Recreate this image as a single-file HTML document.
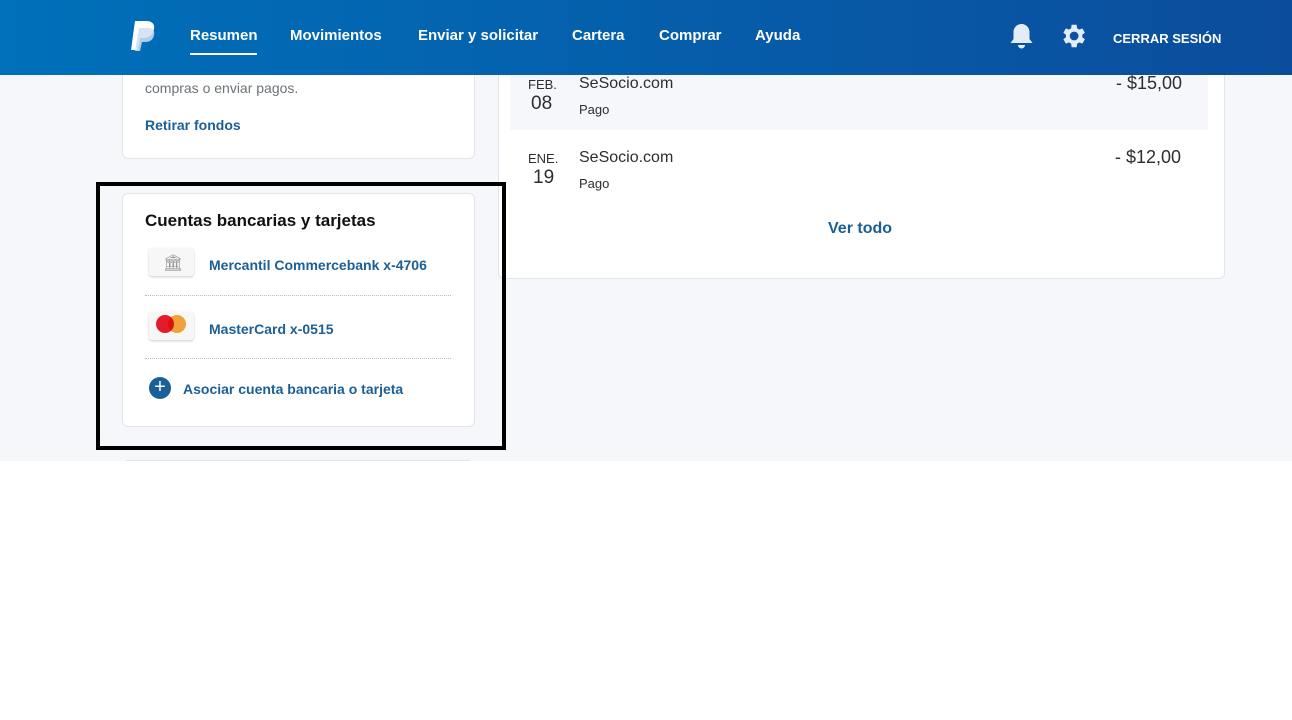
<!DOCTYPE html>
<html><head><style>
*{box-sizing:border-box;margin:0;padding:0}
body{width:1292px;height:720px;background:#fff;font-family:"Liberation Sans",sans-serif;position:relative;overflow:hidden}
.bg{position:absolute;left:0;top:0;width:1292px;height:461px;background:#f5f7fa}
.hdr{position:absolute;left:0;top:0;width:1292px;height:75px;background:linear-gradient(90deg,#0070ba,#0b4d9c);z-index:5}
.nav{position:absolute;top:27px;color:#fff;font-size:15px;font-weight:bold}
.card{position:absolute;background:#fff;border:1px solid #e1e4e8;border-radius:6px}
.a{position:absolute;color:#1a5f95;font-weight:bold;font-size:14px}
.t{position:absolute;color:#2c2e2f}
</style></head><body>
<div class="bg"></div>
<div class="hdr">
<svg style="position:absolute;left:129px;top:20px" width="28" height="32" viewBox="0 0 28 32"><path d="M6 1h11c6 0 9 3 8 8-1 6-5 9-11 9h-3l-2 12H2z" fill="#fff"/><path d="M10 8h9c5 0 7 3 6 7-1 5-4 7-9 7h-3l-2 9H6z" fill="#cfe0f1" opacity=".85"/></svg>
<div class="nav" style="left:190px">Resumen</div>
<div style="position:absolute;left:190px;top:53px;width:67px;height:2px;background:#fff"></div>
<div class="nav" style="left:290px">Movimientos</div>
<div class="nav" style="left:418px">Enviar y solicitar</div>
<div class="nav" style="left:572px">Cartera</div>
<div class="nav" style="left:659px">Comprar</div>
<div class="nav" style="left:755px">Ayuda</div>
<svg style="position:absolute;left:1009px;top:23px" width="25" height="27" viewBox="0 0 25 27"><path d="M12.5 1c-5 0-8 4-8 8v7l-3 4h22l-3-4V9c0-4-3-8-8-8z M9 22a3.5 3.5 0 0 0 7 0z" fill="#e3ecf8"/></svg>
<svg style="position:absolute;left:1058px;top:21px" width="30" height="30" viewBox="0 0 24 24"><path fill="#e3ecf8" d="M19.4 13a7.5 7.5 0 0 0 0-2l2.1-1.6-2-3.5-2.5 1a7.6 7.6 0 0 0-1.7-1L14.9 3h-4l-.4 2.9a7.6 7.6 0 0 0-1.7 1l-2.5-1-2 3.5L6.4 11a7.5 7.5 0 0 0 0 2l-2.1 1.6 2 3.5 2.5-1a7.6 7.6 0 0 0 1.7 1l.4 2.9h4l.4-2.9a7.6 7.6 0 0 0 1.7-1l2.5 1 2-3.5zM12.9 15.5a3.5 3.5 0 1 1 0-7 3.5 3.5 0 0 1 0 7z"/></svg>
<div style="position:absolute;left:1113px;top:31px;color:#fff;font-size:13px;font-weight:bold">CERRAR SESIÓN</div>
</div>

<div class="card" style="left:122px;top:40px;width:353px;height:119px"></div>
<div class="t" style="left:145px;top:80px;font-size:14px;color:#6c7378">compras o enviar pagos.</div>
<div class="a" style="left:145px;top:117px">Retirar fondos</div>

<div class="card" style="left:498px;top:40px;width:727px;height:239px"></div>
<div style="position:absolute;left:510px;top:75px;width:698px;height:55px;background:#f5f7fa"></div>
<div class="t" style="left:528px;top:77px;font-size:13px">FEB.</div>
<div class="t" style="left:531px;top:93px;font-size:19px">08</div>
<div class="t" style="left:579px;top:75px;font-size:16px">SeSocio.com</div>
<div class="t" style="left:579px;top:102px;font-size:13px">Pago</div>
<div class="t" style="left:1116px;top:73px;font-size:18px">- $15,00</div>
<div class="t" style="left:528px;top:151px;font-size:13px">ENE.</div>
<div class="t" style="left:533px;top:167px;font-size:19px">19</div>
<div class="t" style="left:579px;top:149px;font-size:16px">SeSocio.com</div>
<div class="t" style="left:579px;top:176px;font-size:13px">Pago</div>
<div class="t" style="left:1115px;top:147px;font-size:18px">- $12,00</div>
<div class="a" style="left:828px;top:220px;font-size:16px">Ver todo</div>

<div class="card" style="left:122px;top:193px;width:353px;height:234px"></div>
<div class="t" style="left:145px;top:211px;font-size:17px;font-weight:bold;color:#111">Cuentas bancarias y tarjetas</div>
<div style="position:absolute;left:149px;top:248px;width:45px;height:28px;background:#f7f7f7;border-radius:3px;box-shadow:0 1px 2px #ccc"></div>
<div style="position:absolute;left:163px;top:253px;color:#999;font-size:16px">🏛</div>
<div class="a" style="left:209px;top:257px">Mercantil Commercebank x-4706</div>
<div style="position:absolute;left:145px;top:295px;width:306px;border-top:1px dotted #bbb"></div>
<div style="position:absolute;left:149px;top:312px;width:45px;height:28px;background:#f7f7f7;border-radius:3px;box-shadow:0 1px 2px #ccc"></div>
<div style="position:absolute;left:156px;top:315px;width:18px;height:18px;border-radius:50%;background:#e41b2c"></div>
<div style="position:absolute;left:168px;top:315px;width:18px;height:18px;border-radius:50%;background:#f8a63a;mix-blend-mode:multiply"></div>
<div class="a" style="left:209px;top:321px">MasterCard x-0515</div>
<div style="position:absolute;left:145px;top:358px;width:306px;border-top:1px dotted #bbb"></div>
<div style="position:absolute;left:149px;top:377px;width:22px;height:22px;border-radius:50%;background:#1a5f95;color:#fff;font-size:20px;line-height:21px;text-align:center">+</div>
<div class="a" style="left:183px;top:381px">Asociar cuenta bancaria o tarjeta</div>
<div style="position:absolute;left:96px;top:182px;width:410px;height:268px;border:4px solid #000"></div>
<div style="position:absolute;left:126px;top:460px;width:344px;border-top:1px solid #e1e4e8"></div>
</body></html>
